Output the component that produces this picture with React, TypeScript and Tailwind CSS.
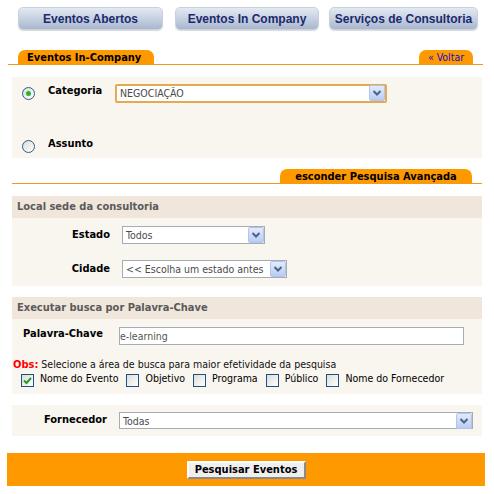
import React from 'react';

const TXT = "font-['DejaVu_Sans_Condensed','DejaVu_Sans',sans-serif]";

const Arrow = () => (
  <div className="w-[16px] h-[16px] shrink-0 rounded-[2px] border border-[#b3c5ec] bg-gradient-to-b from-[#e3ebfd] to-[#b8ccf4] flex items-center justify-center">
    <svg width="10" height="8" viewBox="0 0 10 8">
      <path d="M1.5 2 L5 5.5 L8.5 2" fill="none" stroke="#4d6185" strokeWidth="2" />
    </svg>
  </div>
);

interface SelectProps {
  value: string;
  className: string;
  focused?: boolean;
}

const Select: React.FC<SelectProps> = ({ value, className, focused }) => (
  <div
    className={`${className} flex items-center bg-white ${
      focused ? 'border-2 border-[#e3aa4f] rounded-[2px]' : 'border border-[#a5acb2]'
    }`}
  >
    <span className="flex-1 pl-[3px] text-[10.5px] text-[#4a4a4a] leading-[14px] whitespace-nowrap">{value}</span>
    <Arrow />
  </div>
);

const Radio: React.FC<{ checked?: boolean }> = ({ checked }) => (
  <div className="w-[13px] h-[13px] rounded-full border border-[#2e5d8a] bg-gradient-to-br from-[#dcdcd7] to-white flex items-center justify-center shrink-0">
    {checked && <div className="w-[5px] h-[5px] rounded-full bg-[#2bb12b]" />}
  </div>
);

const Checkbox: React.FC<{ checked?: boolean }> = ({ checked }) => (
  <div className="w-[13px] h-[13px] border border-[#1c5180] bg-gradient-to-br from-[#dcdcd7] to-white flex items-center justify-center shrink-0">
    {checked && (
      <svg width="9" height="9" viewBox="0 0 9 9">
        <path d="M1 4.5 L3.5 7 L8 2" fill="none" stroke="#21a121" strokeWidth="2" />
      </svg>
    )}
  </div>
);

const NavButton: React.FC<{ label: string; className: string }> = ({ label, className }) => (
  <div
    className={`${className} h-[23px] rounded-[5px] border border-[#c9d1dd] bg-gradient-to-b from-[#e4eaf3] to-[#a9b7cf] flex items-center justify-center font-['Liberation_Sans',Arial,sans-serif] font-bold text-[12px] text-[#1b2a6b] shadow-[0_1px_1px_rgba(0,0,0,0.15)]`}
  >
    {label}
  </div>
);

const SectionHeader: React.FC<{ title: string }> = ({ title }) => (
  <div className="h-[22px] bg-[#f0e6dc] flex items-center pl-[5px] font-bold text-[11px] text-[#5a5a5a]">{title}</div>
);

const App: React.FC = () => {
  const areas = [
    { label: 'Nome do Evento', checked: true },
    { label: 'Objetivo' },
    { label: 'Programa' },
    { label: 'Público' },
    { label: 'Nome do Fornecedor' },
  ];

  return (
    <div className={`w-[494px] h-[494px] bg-white overflow-hidden ${TXT} text-black`}>
      {/* top navigation */}
      <div className="flex pt-[7px] pl-[18px]">
        <NavButton label="Eventos Abertos" className="w-[145px]" />
        <NavButton label="Eventos In Company" className="w-[144px] ml-[12px]" />
        <NavButton label="Serviços de Consultoria" className="w-[149px] ml-[10px]" />
      </div>

      {/* title tab */}
      <div className="mt-[20px] ml-[8px] w-[475px] flex items-end justify-between px-[10px] border-b border-[#f29a1f]">
        <div className="h-[14px] w-[136px] bg-[#ff9900] rounded-t-[7px] flex items-center pl-[9px] font-bold text-[11px] leading-none">
          Eventos In-Company
        </div>
        <div className="h-[14px] w-[54px] bg-[#ff9900] rounded-t-[7px] flex items-center justify-center text-[10.5px] leading-none text-[#1010d0]">
          « Voltar
        </div>
      </div>

      {/* category / subject */}
      <div className="mt-[12px] mx-[12px] bg-[#f9f5ef] pt-[7px] pb-[3px]">
        <div className="flex items-center h-[18px] pl-[10px]">
          <Radio checked />
          <span className="ml-[13px] w-[67px] font-bold text-[11px] self-start leading-[14px]">Categoria</span>
          <Select value="NEGOCIAÇÃO" className="w-[272px] h-[19px]" focused />
        </div>
        <div className="flex items-center h-[18px] pl-[10px] mt-[35px]">
          <Radio />
          <span className="ml-[13px] font-bold text-[11px] self-start leading-[14px]">Assunto</span>
        </div>
      </div>

      {/* advanced search tab */}
      <div className="mt-[11px] mx-[12px] flex justify-end pr-[10px] border-b border-[#f29a1f]">
        <div className="h-[14px] w-[192px] bg-[#ff9900] rounded-t-[7px] flex items-center justify-center font-bold text-[11px] leading-none">
          esconder Pesquisa Avançada
        </div>
      </div>

      {/* location */}
      <div className="mt-[12px] mx-[12px]">
        <SectionHeader title="Local sede da consultoria" />
        <div className="bg-[#f9f5ef] pt-[8px] pb-[8px]">
          <div className="flex items-center h-[18px]">
            <span className="w-[98px] text-right font-bold text-[11px]">Estado</span>
            <Select value="Todos" className="ml-[12px] w-[143px] h-[18px]" />
          </div>
          <div className="flex items-center h-[18px] mt-[16px]">
            <span className="w-[98px] text-right font-bold text-[11px]">Cidade</span>
            <Select value="<< Escolha um estado antes" className="ml-[12px] w-[165px] h-[18px]" />
          </div>
        </div>
      </div>

      {/* keyword */}
      <div className="mt-[11px] mx-[12px]">
        <SectionHeader title="Executar busca por Palavra-Chave" />
        <div className="bg-[#f9f5ef] pt-[8px] h-[75px]">
          <div className="flex items-center h-[18px]">
            <span className="w-[107px] pl-[11px] font-bold text-[11px] self-start leading-[14px]">Palavra-Chave</span>
            <div className="w-[345px] h-[18px] border border-[#a5acb2] bg-white flex items-center text-[10.5px] text-[#555] leading-none">
              e-learning
            </div>
          </div>
          <div className="mt-[13px] pl-[1px] text-[10.5px] leading-[13px] text-[#111]">
            <span className="font-bold text-[#ff0000] text-[11px]">Obs:</span> Selecione a área de busca para maior efetividade da pesquisa
          </div>
          <div className="flex items-center pl-[9px] mt-[1px] h-[15px]">
            {areas.map((a, i) => (
              <div key={a.label} className={`flex items-start ${i > 0 ? 'ml-[8px]' : ''}`}>
                <div className="mt-[2px]">
                  <Checkbox checked={a.checked} />
                </div>
                <span className="ml-[6px] text-[10.5px] leading-[13px]">{a.label}</span>
              </div>
            ))}
          </div>
        </div>
      </div>

      {/* supplier */}
      <div className="mt-[11px] mx-[12px] bg-[#f9f5ef] h-[31px] pt-[7px]">
        <div className="flex items-center h-[17px]">
          <span className="w-[95px] text-right font-bold text-[11px]">Fornecedor</span>
          <Select value="Todas" className="ml-[12px] w-[354px] h-[17px]" />
        </div>
      </div>

      {/* footer */}
      <div className="mt-[17px] ml-[7px] w-[478px] h-[33px] bg-[#ff9900] flex items-center justify-center">
        <button className="w-[119px] h-[18px] bg-[#efefef] border-2 border-t-white border-l-white border-r-[#8a8a8a] border-b-[#8a8a8a] font-bold text-[11px] leading-none text-black">
          Pesquisar Eventos
        </button>
      </div>
    </div>
  );
};

export default App;
